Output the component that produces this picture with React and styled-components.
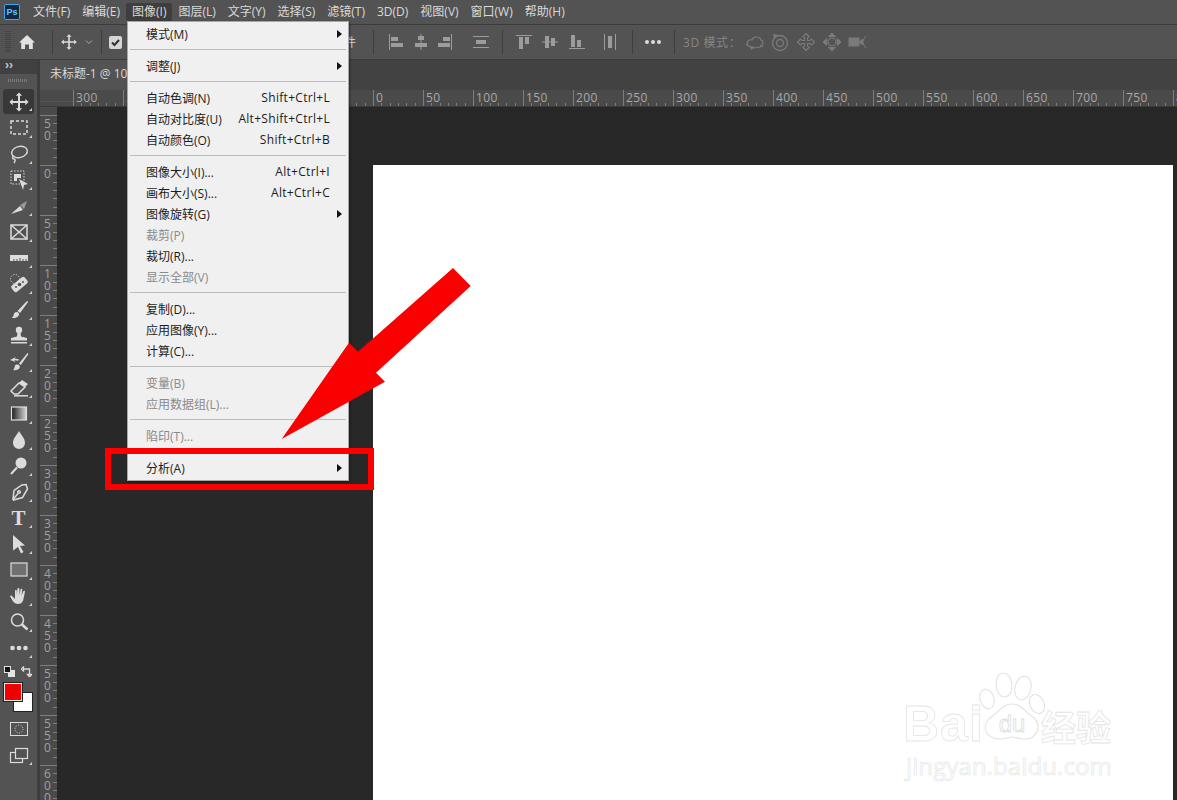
import React from 'react';
import styled, { createGlobalStyle } from 'styled-components';

const FONT = '"Open Sans", "Noto Sans CJK SC", sans-serif';

const GlobalStyle = createGlobalStyle`
  html, body {
    margin: 0;
    background: #535353;
    font-family: ${FONT};
  }
`;

const Page = styled.div`
  position: relative;
  display: flex;
  flex-direction: column;
  width: 1177px;
  height: 800px;
  overflow: hidden;
  background: #535353;
`;

/* ---------- menu bar ---------- */

const MenuBar = styled.div`
  display: flex;
  align-items: center;
  height: 24px;
  padding-left: 4px;
  background: #535353;
  border-bottom: 1px solid #3c3c3c;
  box-sizing: content-box;
`;

const PsLogo = styled.div`
  display: flex;
  align-items: center;
  justify-content: center;
  width: 14px;
  height: 14px;
  margin-right: 7px;
  border: 1px solid #4aa3e6;
  border-radius: 2px;
  background: #0e2a42;
  color: #6cc0f5;
  font: 700 9px "Liberation Sans", sans-serif;
`;

const MenuItem = styled.div`
  height: 18px;
  padding: 0 6px;
  border-radius: 2px;
  line-height: 17px;
  font-size: 12px;
  white-space: nowrap;
  color: #dadada;
  background: ${(p) => (p.$open ? '#3e3e3e' : 'transparent')};
`;

/* ---------- options bar ---------- */

const OptionsBar = styled.div`
  display: flex;
  align-items: center;
  height: 35px;
  background: #535353;
  border-bottom: 1px solid #3c3c3c;
  box-sizing: border-box;
`;

const Slot = styled.div`
  display: flex;
  flex-shrink: 0;
  align-items: center;
  justify-content: center;
  width: ${(p) => p.$w}px;
  margin-left: ${(p) => p.$ml}px;
`;

const Sep = styled.div`
  flex-shrink: 0;
  width: 1px;
  height: 24px;
  margin-left: ${(p) => p.$ml}px;
  background: #3f3f3f;
`;

const Grip = styled.div`
  flex-shrink: 0;
  width: 6px;
  height: 22px;
  margin-left: 5px;
  background: repeating-linear-gradient(to bottom, #444 0 1px, transparent 1px 2px);
`;

const OptionText = styled.div`
  flex-shrink: 0;
  margin-left: ${(p) => p.$ml}px;
  font-size: 12px;
  white-space: nowrap;
  color: ${(p) => (p.$dim ? '#858585' : '#d0d0d0')};
  letter-spacing: ${(p) => (p.$dim ? '0.6px' : '0')};
`;

const CheckBox = styled.div`
  display: flex;
  align-items: center;
  justify-content: center;
  width: 13px;
  height: 13px;
  border-radius: 2px;
  background: #d6d6d6;
`;

/* ---------- workspace ---------- */

const Workspace = styled.div`
  display: flex;
  flex: 1;
  min-height: 0;
`;

const ToolBar = styled.div`
  display: flex;
  flex-direction: column;
  flex-shrink: 0;
  width: 37px;
  background: #535353;
  border-right: 3px solid #3d3d3d;
`;

const Collapse = styled.div`
  height: 14px;
  padding-left: 5px;
  background: #414141;
  color: #c9c9c9;
  font: 700 12px/11px "Liberation Sans", sans-serif;
  letter-spacing: 0;
`;

const ToolGrip = styled.div`
  width: 20px;
  height: 3px;
  margin: 5px 0 7px 8px;
  background: repeating-linear-gradient(to right, #7a7a7a 0 1px, transparent 1px 2px);
`;

const Tool = styled.div`
  position: relative;
  display: flex;
  align-items: center;
  justify-content: center;
  width: 31px;
  height: ${(p) => (p.$active ? '25px' : '26px')};
  margin-left: 3px;
  margin-top: ${(p) => p.$mt || 0}px;
  margin-bottom: ${(p) => (p.$active ? '1px' : '0')};
  border-radius: 3px;
  background: ${(p) => (p.$active ? '#383838' : 'transparent')};
  color: #dcdcdc;

  &::after {
    content: '';
    display: ${(p) => (p.$plain ? 'none' : 'block')};
    position: absolute;
    right: 2px;
    bottom: 3px;
    border-style: solid;
    border-width: 0 0 3px 3px;
    border-color: transparent transparent #cfcfcf transparent;
  }
`;

const ToolIcon = styled.svg`
  display: block;
  width: 22px;
  height: 22px;
  flex-shrink: 0;
`;

const BarIcon = styled.svg`
  display: block;
  width: ${(p) => p.$size || 18}px;
  height: ${(p) => p.$size || 18}px;
  flex-shrink: 0;
`;

const TypeGlyph = styled.span`
  font: 700 21px/22px "Liberation Serif", serif;
  color: #dcdcdc;
`;

const SwapRow = styled.div`
  display: flex;
  align-items: center;
  justify-content: space-between;
  width: 28px;
  height: 11px;
  margin: 5px 0 0 4px;
`;

const ColorPair = styled.div`
  position: relative;
  width: 30px;
  height: 30px;
  margin: 5px 0 0 3px;
`;

const Swatch = styled.div`
  position: absolute;
  left: ${(p) => (p.$front ? 0 : 10)}px;
  top: ${(p) => (p.$front ? 0 : 10)}px;
  width: 18px;
  height: 18px;
  border: 1px solid #222;
  outline: ${(p) => (p.$front ? '1px solid #e8e8e8' : 'none')};
  outline-offset: -2px;
  background: ${(p) => p.$color};
`;

const MainColumn = styled.div`
  display: flex;
  flex-direction: column;
  flex: 1;
  min-width: 0;
`;

const TabBar = styled.div`
  flex-shrink: 0;
  height: 30px;
  background: #424242;
`;

const Tab = styled.div`
  width: 280px;
  height: 30px;
  padding-left: 10px;
  box-sizing: border-box;
  background: #535353;
  color: #d8d8d8;
  font-size: 12px;
  line-height: 28px;
  white-space: nowrap;
`;

const TopRulerRow = styled.div`
  display: flex;
  flex-shrink: 0;
  height: 17px;
  background: #4a4a4a;
  border-bottom: 1px solid #3a3a3a;
  box-sizing: border-box;
`;

const RulerCorner = styled.div`
  flex-shrink: 0;
  width: 33px;
  height: 16px;
  background-image:
    repeating-linear-gradient(to right, #5e5e5e 0 1px, transparent 1px 2px);
  background-size: 100% 1px;
  background-repeat: no-repeat;
  background-position: 0 11px;
`;

const TopCell = styled.div`
  flex-shrink: 0;
  box-sizing: border-box;
  width: 50px;
  height: 16px;
  padding-left: 2px;
  border-left: 1px solid #7d7d7d;
  color: #a8a8a8;
  font-size: 12px;
  line-height: 16px;
  letter-spacing: 0.4px;
  background: repeating-linear-gradient(to right, transparent 0 7.33px, #7d7d7d 7.33px 8.33px) 0 100% / 100% 3px no-repeat;
`;

const BodyRow = styled.div`
  display: flex;
  flex: 1;
  min-height: 0;
`;

const SideRuler = styled.div`
  flex-shrink: 0;
  width: 17px;
  padding-top: 8px;
  box-sizing: border-box;
  overflow: hidden;
  background: #4a4a4a;
`;

const SideCell = styled.div`
  box-sizing: border-box;
  height: 50px;
  padding: 2px 0 0 3px;
  border-top: 1px solid #7d7d7d;
  color: #a0a0a0;
  font-size: 12px;
  line-height: 12px;
  background: repeating-linear-gradient(to bottom, transparent 0 7.33px, #7d7d7d 7.33px 8.33px) 100% 0 / 4px 100% no-repeat;
`;

const Digit = styled.div`
  width: 9px;
  text-align: center;
`;

const Canvas = styled.div`
  display: flex;
  flex: 1;
  padding: 58px 4px 0 316px;
  min-width: 0;
  background: #282828;
`;

const Doc = styled.div`
  position: relative;
  flex: 1;
  background: #fff;
`;

/* ---------- watermark ---------- */

const Watermark = styled.div`
  position: absolute;
  left: 530px;
  top: 506px;
  width: 222px;
`;

const MarkRow = styled.div`
  display: flex;
  align-items: flex-end;
  height: 76px;
`;

const MarkLatin = styled.div`
  width: 79px;
  margin-bottom: 2px;
  font: 700 50px/42px "Liberation Sans", sans-serif;
  letter-spacing: 1px;
  color: #fff;
  -webkit-text-stroke: 0.8px #e4e4e4;
`;

const PawIcon = styled.svg`
  flex-shrink: 0;
  overflow: visible;
`;

const MarkCjk = styled.div`
  margin-left: -3px;
  font: 700 35px/42px "Noto Sans CJK SC", sans-serif;
  white-space: nowrap;
  color: #fff;
  -webkit-text-stroke: 0.8px #e4e4e4;
`;

const MarkUrl = styled.div`
  margin: 6px 0 0 3px;
  font: 400 24px/26px "Open Sans", sans-serif;
  letter-spacing: 0.1px;
  white-space: nowrap;
  color: #fff;
  -webkit-text-stroke: 0.7px #e6e6e6;
`;

/* ---------- dropdown ---------- */

const Menu = styled.div`
  position: absolute;
  left: 127px;
  top: 21px;
  width: 222px;
  height: 460px;
  padding-top: 1px;
  box-sizing: border-box;
  background: #f0f0f0;
  border: 1px solid #a8a8a8;
  box-shadow: 1px 1px 2px rgba(0, 0, 0, 0.4);
`;

const Row = styled.div`
  display: flex;
  align-items: center;
  justify-content: space-between;
  height: 21px;
  padding: 0 18px;
  font-size: 12px;
  white-space: nowrap;
  color: ${(p) => (p.$off ? '#8a8a8a' : '#1c1c1c')};
`;

const Shortcut = styled.span`
  letter-spacing: 0.3px;
`;

const SubArrow = styled.span`
  width: 0;
  height: 0;
  margin-right: -12px;
  border-style: solid;
  border-width: 4.5px 0 4.5px 5px;
  border-color: transparent transparent transparent #111;
`;

const Divider = styled.div`
  height: 1px;
  margin: 5px 2px;
  background: #bcbcbc;
`;

/* ---------- annotation ---------- */

const RedFrame = styled.div`
  position: absolute;
  left: 105px;
  top: 448px;
  width: 269px;
  height: 42px;
  box-sizing: border-box;
  border: 6px solid #fb0000;
`;

const RedArrow = styled.svg`
  position: absolute;
  left: 270px;
  top: 260px;
  width: 210px;
  height: 190px;
`;

/* ---------- data ---------- */

const menuNames = ['文件(F)', '编辑(E)', '图像(I)', '图层(L)', '文字(Y)', '选择(S)', '滤镜(T)', '3D(D)', '视图(V)', '窗口(W)', '帮助(H)'];

const menuGroups = [
  [{ t: '模式(M)', sub: true }],
  [{ t: '调整(J)', sub: true }],
  [
    { t: '自动色调(N)', k: 'Shift+Ctrl+L' },
    { t: '自动对比度(U)', k: 'Alt+Shift+Ctrl+L' },
    { t: '自动颜色(O)', k: 'Shift+Ctrl+B' },
  ],
  [
    { t: '图像大小(I)...', k: 'Alt+Ctrl+I' },
    { t: '画布大小(S)...', k: 'Alt+Ctrl+C' },
    { t: '图像旋转(G)', sub: true },
    { t: '裁剪(P)', off: true },
    { t: '裁切(R)...' },
    { t: '显示全部(V)', off: true },
  ],
  [{ t: '复制(D)...' }, { t: '应用图像(Y)...' }, { t: '计算(C)...' }],
  [{ t: '变量(B)', off: true }, { t: '应用数据组(L)...', off: true }],
  [{ t: '陷印(T)...', off: true }],
  [{ t: '分析(A)', sub: true }],
];

const topLabels = [300, 250, 200, 150, 100, 50, 0, 50, 100, 150, 200, 250, 300, 350, 400, 450, 500, 550, 600, 650, 700, 750, 800];
const sideLabels = [50, 0, 50, 100, 150, 200, 250, 300, 350, 400, 450, 500, 550, 600];

const C = '#dcdcdc';

const tools = [
  <path fill={C} d="M11 1.5l3.2 3.2h-2.2v5.3h5.3V7.8l3.2 3.2-3.2 3.2v-2.2H12v5.3h2.2L11 20.5l-3.2-3.2H10V12H4.700v2.200L1.500 11l3.200-3.200V10H10V4.700H7.800z" />,
  <rect x="3" y="4" width="16" height="13" fill="none" stroke={C} strokeWidth="1.5" strokeDasharray="3 2" />,
  <g fill="none" stroke={C} strokeWidth="1.4"><ellipse cx="11.500" cy="9" rx="8" ry="5.500" transform="rotate(-14 11.500 9)" /><path d="M5.500 13c-1.500 1.500-1 3 .5 3s1.500 2 0 4" /></g>,
  <g><rect x="3" y="2" width="13" height="13" fill="none" stroke={C} strokeDasharray="1.500 1.500" /><path fill={C} d="M6 5h7v4H9v3H6z" /><path fill={C} d="M11 10l9 5-4 1-1 5z" /></g>,
  <g><path fill={C} d="M3 19l9-8 3 4z" /><path fill="#9a9a9a" d="M12 10l7-4-3 8z" /></g>,
  <g fill="none" stroke={C} strokeWidth="1.500"><rect x="3" y="4" width="16" height="14" /><path d="M3 4l16 14M19 4L3 18" /></g>,
  <path fill={C} d="M2 8h18v6h-1.500v-2h-1v2h-2v-2h-1v2h-2v-3h-1v3h-2v-2h-1v2h-2v-2h-1v2H2z" />,
  <g><circle cx="7" cy="6" r="4.500" fill="none" stroke={C} strokeDasharray="1.200 1.500" /><rect x="3" y="7.500" width="17" height="8" rx="2" fill={C} transform="rotate(-40 11.500 11.500)" /><circle cx="11.500" cy="11.500" r="1.800" fill="#535353" /><circle cx="8" cy="14" r="1" fill="#535353" /><circle cx="15" cy="9" r="1" fill="#535353" /></g>,
  <g fill={C}><path d="M19.500 2c.8.500.2 1.500-.3 2.300L12 14l-2.500-2 8-8.500C18.300 2.700 19 1.700 19.500 2z" /><path d="M8.500 13c2 0 3 1.500 2.500 3-.7 2.200-4 3.500-7.500 3 2-1 2-2.500 2.300-3.700.3-1.200 1.200-2.300 2.700-2.300z" /></g>,
  <g fill={C}><circle cx="11" cy="5" r="3.200" /><path d="M9.500 7h3l.5 4.500 6 1.500v2.500H3V13l6-1.500z" /><rect x="3" y="17" width="16" height="1.500" /></g>,
  <g fill={C}><path d="M19.500 2L11 12.500l1.800 1.500L20.500 3z" /><path d="M8.500 13.500c2.500-.5 4 1.500 3 3.500-.8 1.700-3.500 2.600-6.500 2 1.500-1 1.500-2.500 1.700-3.500.1-.9.800-1.800 1.800-2z" /><path d="M2 9l6-3-1.500 1.800c2 0 3.500.2 4.500 1l-1 1c-1-.5-2.500-.8-4-.6L8 11z" /></g>,
  <g><path fill="none" stroke={C} strokeWidth="1.500" d="M3 14l8-8 6 4-7 7H6z" /><path fill={C} d="M11 6l3-3 6 4-3 3z" /><path stroke={C} strokeWidth="1.500" d="M6 18.800h14" /></g>,
  <rect x="3.500" y="4" width="15" height="13" fill="url(#grad)" stroke={C} strokeWidth="1.200" />,
  <path fill={C} d="M11 2c2 4 6 7 6 12a6 6 0 0 1-12 0c0-5 4-8 6-12z" />,
  <g><circle cx="13" cy="8" r="5.500" fill={C} /><path stroke={C} strokeWidth="2" d="M9 12.500l-6 6.500" /></g>,
  <g fill="none" stroke={C} strokeWidth="1.500"><path d="M18 3.500l1.500 4.500-5 8.500-9 2.500-.5-1 1-8.500 8-5.500z" /><path d="M5 18.500l5-6" /><circle cx="11" cy="11" r="1.300" /></g>,
  null,
  <path fill={C} d="M5 2l12 10.500-5 .5 3.500 6-2.500 1.500-3-6.500-5 3.500z" />,
  <rect x="3" y="4" width="16" height="13" fill="#707070" stroke={C} strokeWidth="1.200" />,
  <path fill={C} d="M4 11l3 3V6c0-1.400 1.800-1.400 1.800 0v4l.6-6c.1-1.400 1.900-1.400 2 0l.1 6 1-5.500c.3-1.300 2-1 1.800.3l-.8 5.700 1.700-4c.5-1.200 2.100-.7 1.700.6l-1.400 7c-.6 3-2 4.900-5 4.900-3.300 0-4.700-1.400-6-3.500L2.400 12c-.7-1.200.7-2 1.600-1z" />,
  <g fill="none" stroke={C}><circle cx="9.500" cy="9" r="6" strokeWidth="1.500" /><path strokeWidth="2.500" d="M14 13.500l5.500 5" /></g>,
  <g fill={C}><circle cx="4.500" cy="11" r="2.300" /><circle cx="11" cy="11" r="2.300" /><circle cx="17.500" cy="11" r="2.300" /></g>,
];

const alignIcons = [
  <g><rect x="3" y="1" width="1" height="16" /><rect x="5" y="4" width="7" height="4" /><rect x="5" y="10" width="12" height="4" /></g>,
  <g><rect x="8.500" y="1" width="1" height="16" /><rect x="6" y="3" width="6" height="4" /><rect x="3" y="10" width="12" height="4" /></g>,
  <g><rect x="14" y="1" width="1" height="16" /><rect x="6" y="4" width="7" height="4" /><rect x="1" y="10" width="12" height="4" /></g>,
  <g><rect x="1" y="3" width="16" height="1" /><rect x="1" y="14" width="16" height="1" /><rect x="4" y="7" width="10" height="4" /></g>,
];

const alignIcons2 = [
  <g><rect x="1" y="2" width="16" height="1" /><rect x="4" y="4" width="4" height="12" /><rect x="10" y="4" width="4" height="7" /></g>,
  <g><rect x="1" y="8.500" width="16" height="1" /><rect x="4" y="3" width="4" height="12" /><rect x="10" y="5" width="4" height="8" /></g>,
  <g><rect x="1" y="15" width="16" height="1" /><rect x="3" y="2" width="4" height="12" /><rect x="9" y="7" width="4" height="7" /></g>,
  <g><rect x="3" y="1" width="1" height="16" /><rect x="14" y="1" width="1" height="16" /><rect x="7" y="3" width="4" height="12" /></g>,
];

const modeIcons = [
  <g fill="none" strokeWidth="1.200"><path d="M4 13c-2-3 1-6 4-5 1-4 8-4 9 0 3 1 2 6-1 6" /><path d="M2 12c3 4 10 5 17 2" /><path fill="#7a7a7a" stroke="none" d="M6 14l5 1-4 3z" /></g>,
  <g fill="none" strokeWidth="1.300"><circle cx="10" cy="11" r="7.500" /><circle cx="10" cy="11" r="3.500" /><path fill="#7a7a7a" stroke="none" d="M3 2l5 1-4 4z" /></g>,
  <g fill="none" strokeWidth="1.200"><path d="M10 1.500l3 3-1.500 1.500v2.500H14L15.500 7l3 3-3 3-1.500-1.500h-2.500V14l1.500 1.500-3 3-3-3L8.500 14v-2.500H6L4.500 13l-3-3 3-3L6 8.500h2.500V6L7 4.500z" /></g>,
  <g fill="#7a7a7a"><path d="M10 1l3.500 3.500h-7zM10 19l-3.500-3.500h7zM1 10l3.500-3.500v7zM19 10l-3.500 3.500v-7z" /><circle cx="10" cy="10" r="4" fill="none" stroke="#7a7a7a" strokeWidth="1.200" /></g>,
  <g fill="#7a7a7a"><rect x="1" y="6" width="10" height="8" /><path d="M11 10l4-3v6z" /><path d="M18 4l-4 6 4 6" fill="none" stroke="#7a7a7a" /></g>,
];

/* ---------- app ---------- */

function OptionsRow() {
  const gaps = [12, 8, 7, 17];
  const gaps2 = [12, 8, 9, 15];
  const modeGaps = [14, 6, 6, 6, 6];
  return (
    <OptionsBar>
      <Grip />
      <Slot $w={18} $ml={7}>
        <BarIcon viewBox="0 0 18 18"><path fill="#e2e2e2" d="M9 2l8 7.500h-2.200V16H11v-4.500H7V16H3.200V9.500H1z" /></BarIcon>
      </Slot>
      <Sep $ml={16} />
      <Slot $w={18} $ml={7}>
        <BarIcon viewBox="0 0 22 22"><path fill="#dcdcdc" d="M11 1.500l3.200 3.200h-2.200v5.300h5.300V7.800l3.200 3.200-3.200 3.200v-2.200H12v5.300h2.200L11 20.500l-3.200-3.200H10V12H4.700v2.200L1.500 11l3.200-3.200V10H10V4.700H7.800z" /></BarIcon>
      </Slot>
      <Slot $w={8} $ml={7}>
        <BarIcon $size={8} viewBox="0 0 8 8"><path fill="none" stroke="#a8a8a8" d="M1 2.500l3 3 3-3" /></BarIcon>
      </Slot>
      <Sep $ml={8} />
      <Slot $w={14} $ml={6}>
        <CheckBox>
          <BarIcon $size={11} viewBox="0 0 11 11"><path fill="none" stroke="#333" strokeWidth="2" d="M2 5.500l2.500 2.500L9 3" /></BarIcon>
        </CheckBox>
      </Slot>
      <OptionText $ml={162}>显示变换控件</OptionText>
      <Sep $ml={17} />
      {alignIcons.map((icon, i) => (
        <Slot key={i} $w={18} $ml={gaps[i]}>
          <BarIcon viewBox="0 0 18 18" fill="#9c9c9c">{icon}</BarIcon>
        </Slot>
      ))}
      <Sep $ml={12} />
      {alignIcons2.map((icon, i) => (
        <Slot key={i} $w={18} $ml={gaps2[i]}>
          <BarIcon viewBox="0 0 18 18" fill="#9c9c9c">{icon}</BarIcon>
        </Slot>
      ))}
      <Sep $ml={13} />
      <Slot $w={18} $ml={11}>
        <BarIcon viewBox="0 0 18 18" fill="#dcdcdc"><circle cx="3" cy="9" r="2" /><circle cx="9" cy="9" r="2" /><circle cx="15" cy="9" r="2" /></BarIcon>
      </Slot>
      <Sep $ml={12} />
      <OptionText $ml={8} $dim>3D 模式：</OptionText>
      {modeIcons.map((icon, i) => (
        <Slot key={i} $w={20} $ml={i === 0 ? 3 : modeGaps[i]}>
          <BarIcon $size={20} viewBox="0 0 20 20" stroke="#7a7a7a">{icon}</BarIcon>
        </Slot>
      ))}
    </OptionsBar>
  );
}

function Tools() {
  return (
    <ToolBar>
      <Collapse>››</Collapse>
      <ToolGrip />
      {tools.map((icon, i) => (
        <Tool key={i} $active={i === 0}>
          {icon ? (
            <ToolIcon viewBox="0 0 22 22">
              <defs>
                <linearGradient id="grad">
                  <stop offset="0" stopColor="#1c1c1c" />
                  <stop offset="1" stopColor="#d8d8d8" />
                </linearGradient>
              </defs>
              {icon}
            </ToolIcon>
          ) : (
            <TypeGlyph>T</TypeGlyph>
          )}
        </Tool>
      ))}
      <SwapRow>
        <BarIcon $size={11} viewBox="0 0 11 11">
          <rect x="4" y="4" width="7" height="7" fill="#e4e4e4" />
          <rect x="0.500" y="0.500" width="6" height="6" fill="#111" stroke="#e4e4e4" />
        </BarIcon>
        <BarIcon $size={11} viewBox="0 0 11 11">
          <path fill="none" stroke="#dcdcdc" strokeWidth="1.300" d="M2 3h6.500v6M0 3l2.500-2v4zM8.500 11L6.500 8.500h4z" />
        </BarIcon>
      </SwapRow>
      <ColorPair>
        <Swatch $color="#fff" />
        <Swatch $front $color="#f00000" />
      </ColorPair>
      <Tool $plain $mt={4}>
        <ToolIcon viewBox="0 0 22 22">
          <rect x="2.500" y="4.500" width="17" height="13" fill="none" stroke={C} />
          <circle cx="11" cy="11" r="4" fill="none" stroke={C} strokeDasharray="1 1.500" />
        </ToolIcon>
      </Tool>
      <Tool>
        <ToolIcon viewBox="0 0 22 22">
          <rect x="2.500" y="8.500" width="12" height="10" fill="none" stroke={C} strokeWidth="1.200" />
          <rect x="7.500" y="4.500" width="12" height="10" fill="#535353" stroke={C} strokeWidth="1.200" />
        </ToolIcon>
      </Tool>
    </ToolBar>
  );
}

function ImageMenu() {
  return (
    <Menu>
      {menuGroups.map((group, i) => (
        <React.Fragment key={i}>
          {i > 0 && <Divider />}
          {group.map((item) => (
            <Row key={item.t} $off={item.off}>
              <span>{item.t}</span>
              {item.k && <Shortcut>{item.k}</Shortcut>}
              {item.sub && <SubArrow />}
            </Row>
          ))}
        </React.Fragment>
      ))}
    </Menu>
  );
}

function BaiduMark() {
  return (
    <Watermark>
      <MarkRow>
        <MarkLatin>Bai</MarkLatin>
        <PawIcon width="62" height="76" viewBox="0 0 62 76">
          <g fill="#fff" stroke="#e2e2e2" strokeWidth="1.100">
            <ellipse cx="5" cy="28" rx="7" ry="10" transform="rotate(-18 5 28)" />
            <ellipse cx="22" cy="14" rx="8" ry="12" transform="rotate(-5 22 14)" />
            <ellipse cx="41" cy="17" rx="8" ry="12" transform="rotate(12 41 17)" />
            <ellipse cx="55" cy="33" rx="7" ry="10" transform="rotate(-25 55 33)" />
            <path d="M30 33c10 0 14 9 22 14 8 7 4 22-11 21-4 0-8-2-11-2s-7 2-12 2C3 68-1 54 8 47c8-5 12-14 22-14z" />
          </g>
          <text x="30" y="61" textAnchor="middle" fontFamily='"Liberation Sans", sans-serif' fontSize="24" fill="#fff" stroke="#dcdcdc" strokeWidth="0.800">du</text>
        </PawIcon>
        <MarkCjk>经验</MarkCjk>
      </MarkRow>
      <MarkUrl>jingyan.baidu.com</MarkUrl>
    </Watermark>
  );
}

export default function App() {
  return (
    <Page>
      <GlobalStyle />
      <MenuBar>
        <PsLogo>Ps</PsLogo>
        {menuNames.map((name) => (
          <MenuItem key={name} $open={name === '图像(I)'}>{name}</MenuItem>
        ))}
      </MenuBar>
      <OptionsRow />
      <Workspace>
        <Tools />
        <MainColumn>
          <TabBar>
            <Tab>未标题-1 @ 100%(RGB/8#) *</Tab>
          </TabBar>
          <TopRulerRow>
            <RulerCorner />
            {topLabels.map((n, i) => (
              <TopCell key={i}>{n}</TopCell>
            ))}
          </TopRulerRow>
          <BodyRow>
            <SideRuler>
              {sideLabels.map((n, i) => (
                <SideCell key={i}>
                  {String(n).split('').map((d, j) => (
                    <Digit key={j}>{d}</Digit>
                  ))}
                </SideCell>
              ))}
            </SideRuler>
            <Canvas>
              <Doc>
                <BaiduMark />
              </Doc>
            </Canvas>
          </BodyRow>
        </MainColumn>
      </Workspace>
      <ImageMenu />
      <RedFrame />
      <RedArrow viewBox="270 260 210 190">
        <polygon
          fill="#fb0000"
          points="281.700,439 385,381.700 376,372.700 470.700,286 453,268 358,351.700 349,342.700"
        />
      </RedArrow>
    </Page>
  );
}
